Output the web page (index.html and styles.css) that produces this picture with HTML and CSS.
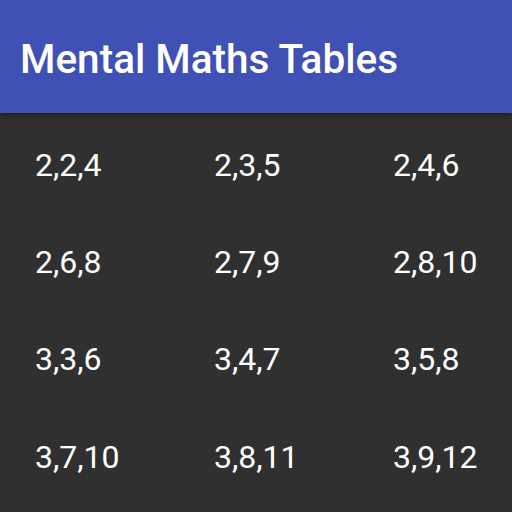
FILE: index.html
```html
<!DOCTYPE html>
<html lang="en">
<head>
    <meta charset="UTF-8">
    <meta name="viewport" content="width=device-width, initial-scale=1.0">
    <title>Mental Maths Tables</title>
    <link rel="stylesheet" href="styles.css">
</head>
<body>

<header class="app-bar">
    <h1>Mental Maths Tables</h1>
</header>

<div class="table-grid">
    <div class="cell">2,2,4</div>
    <div class="cell">2,3,5</div>
    <div class="cell">2,4,6</div>
    <div class="cell">2,6,8</div>
    <div class="cell">2,7,9</div>
    <div class="cell">2,8,10</div>
    <div class="cell">3,3,6</div>
    <div class="cell">3,4,7</div>
    <div class="cell">3,5,8</div>
    <div class="cell">3,7,10</div>
    <div class="cell">3,8,11</div>
    <div class="cell">3,9,12</div>
</div>

</body>
</html>
```

FILE: styles.css
```css
body {
    font-family: Roboto, "Liberation Sans", sans-serif;
    background-color: #303030;
    margin: 0;
    height: 512px;
    overflow: hidden;
}

.app-bar {
    background-color: #3f51b5;
    height: 113px;
    box-sizing: border-box;
    display: flex;
    align-items: center;
    padding: 5px 0 0 20px;
    box-shadow: 0 2px 6px rgba(0, 0, 0, 0.4);
    position: relative;
}

.app-bar h1 {
    margin: 0;
    color: #fff;
    font-size: 40.5px;
    font-weight: 500;
}

.table-grid {
    display: grid;
    grid-template-columns: 179px 179px 1fr;
    grid-auto-rows: 97.3px;
    padding: 3px 0 0 35px;
}

.cell {
    display: flex;
    align-items: center;
    color: #fff;
    font-size: 32px;
}
```
